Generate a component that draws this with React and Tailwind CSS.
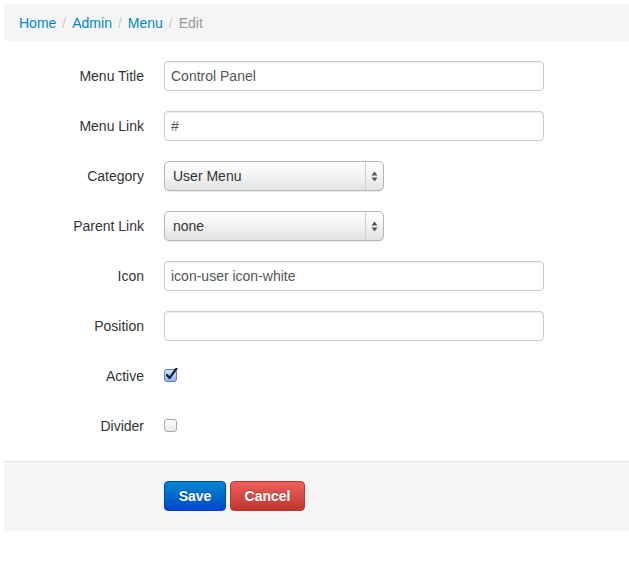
import React from "react";

const font = { fontFamily: '"Liberation Sans", Arial, Helvetica, sans-serif' };

function Label({ children }) {
  return (
    <div className="w-[140px] shrink-0 pt-[5px] text-right text-[14px] leading-[20px] text-[#333]">
      {children}
    </div>
  );
}

function Row({ label, children }) {
  return (
    <div className="mb-[20px] flex h-[30px] gap-[20px]">
      <Label>{label}</Label>
      <div className="flex-1">{children}</div>
    </div>
  );
}

function TextInput({ value }) {
  return (
    <div className="flex h-[30px] w-[380px] items-center rounded-[4px] border border-[#cccccc] bg-white px-[6px] text-[14px] text-[#555] shadow-[inset_0_1px_1px_rgba(0,0,0,0.075)]">
      {value}
    </div>
  );
}

function Select({ value }) {
  return (
    <div className="flex h-[30px] w-[220px] items-stretch rounded-[5px] border border-[#b5b5b5] bg-gradient-to-b from-[#ffffff] via-[#f3f3f3] to-[#e3e3e3] text-[14px] text-[#333] shadow-[0_1px_1px_rgba(0,0,0,0.08)]">
      <div className="flex flex-1 items-center pl-[8px]">{value}</div>
      <div className="flex w-[18px] items-center justify-center border-l border-[#d0d0d0]">
        <svg width="7" height="11" viewBox="0 0 7 11">
          <path d="M3.5 0.5 L6.5 4.5 L0.5 4.5 Z" fill="#555" />
          <path d="M3.5 10.5 L6.5 6.5 L0.5 6.5 Z" fill="#555" />
        </svg>
      </div>
    </div>
  );
}

function Checkbox({ checked }) {
  return (
    <div className="pt-[7px]">
      <svg width="14" height="14" viewBox="0 0 14 14">
        <defs>
          <linearGradient id="cbOn" x1="0" y1="0" x2="0" y2="1">
            <stop offset="0" stopColor="#d6e6fb" />
            <stop offset="1" stopColor="#8db6ec" />
          </linearGradient>
          <linearGradient id="cbOff" x1="0" y1="0" x2="0" y2="1">
            <stop offset="0" stopColor="#ffffff" />
            <stop offset="1" stopColor="#e6e6e6" />
          </linearGradient>
        </defs>
        {checked ? (
          <>
            <rect x="0.5" y="1.5" width="12" height="12" rx="2.5" fill="url(#cbOn)" stroke="#5b7fb8" />
            <path d="M3 7 L5.5 10 L12.5 0.5" fill="none" stroke="#10213d" strokeWidth="2.2" strokeLinecap="round" strokeLinejoin="round" />
          </>
        ) : (
          <rect x="0.5" y="1.5" width="12" height="12" rx="2.5" fill="url(#cbOff)" stroke="#a8a8a8" />
        )}
      </svg>
    </div>
  );
}

export default function App() {
  return (
    <div className="w-[629px] h-[567px] overflow-hidden bg-white" style={font}>
      <div className="w-[660px] pl-[4px] pt-[4px]">
        <div className="mb-[20px] flex h-[37px] items-center rounded-[4px] bg-[#f5f5f5] px-[15px] text-[14px] leading-[20px]">
          <span className="text-[#0088cc]">Home</span>
          <span className="px-[6px] text-[#cccccc]">/</span>
          <span className="text-[#0088cc]">Admin</span>
          <span className="px-[6px] text-[#cccccc]">/</span>
          <span className="text-[#0088cc]">Menu</span>
          <span className="px-[6px] text-[#cccccc]">/</span>
          <span className="text-[#999999]">Edit</span>
        </div>

        <Row label="Menu Title"><TextInput value="Control Panel" /></Row>
        <Row label="Menu Link"><TextInput value="#" /></Row>
        <Row label="Category"><Select value="User Menu" /></Row>
        <Row label="Parent Link"><Select value="none" /></Row>
        <Row label="Icon"><TextInput value="icon-user icon-white" /></Row>
        <Row label="Position"><TextInput value="" /></Row>
        <Row label="Active"><Checkbox checked /></Row>
        <Row label="Divider"><Checkbox checked={false} /></Row>

        <div className="flex h-[70px] gap-[4px] border-t border-[#e5e5e5] bg-[#f5f5f5] pl-[160px] pt-[19px]">
          <div className="flex h-[30px] w-[62px] items-center justify-center rounded-[4px] border border-[#0044cc] bg-gradient-to-b from-[#0088cc] to-[#0044cc] text-[14px] font-bold text-white [text-shadow:0_-1px_0_rgba(0,0,0,0.25)]">
            Save
          </div>
          <div className="flex h-[30px] w-[75px] items-center justify-center rounded-[4px] border border-[#bd362f] bg-gradient-to-b from-[#ee5f5b] to-[#bd362f] text-[14px] font-bold text-white [text-shadow:0_-1px_0_rgba(0,0,0,0.25)]">
            Cancel
          </div>
        </div>
      </div>
    </div>
  );
}
